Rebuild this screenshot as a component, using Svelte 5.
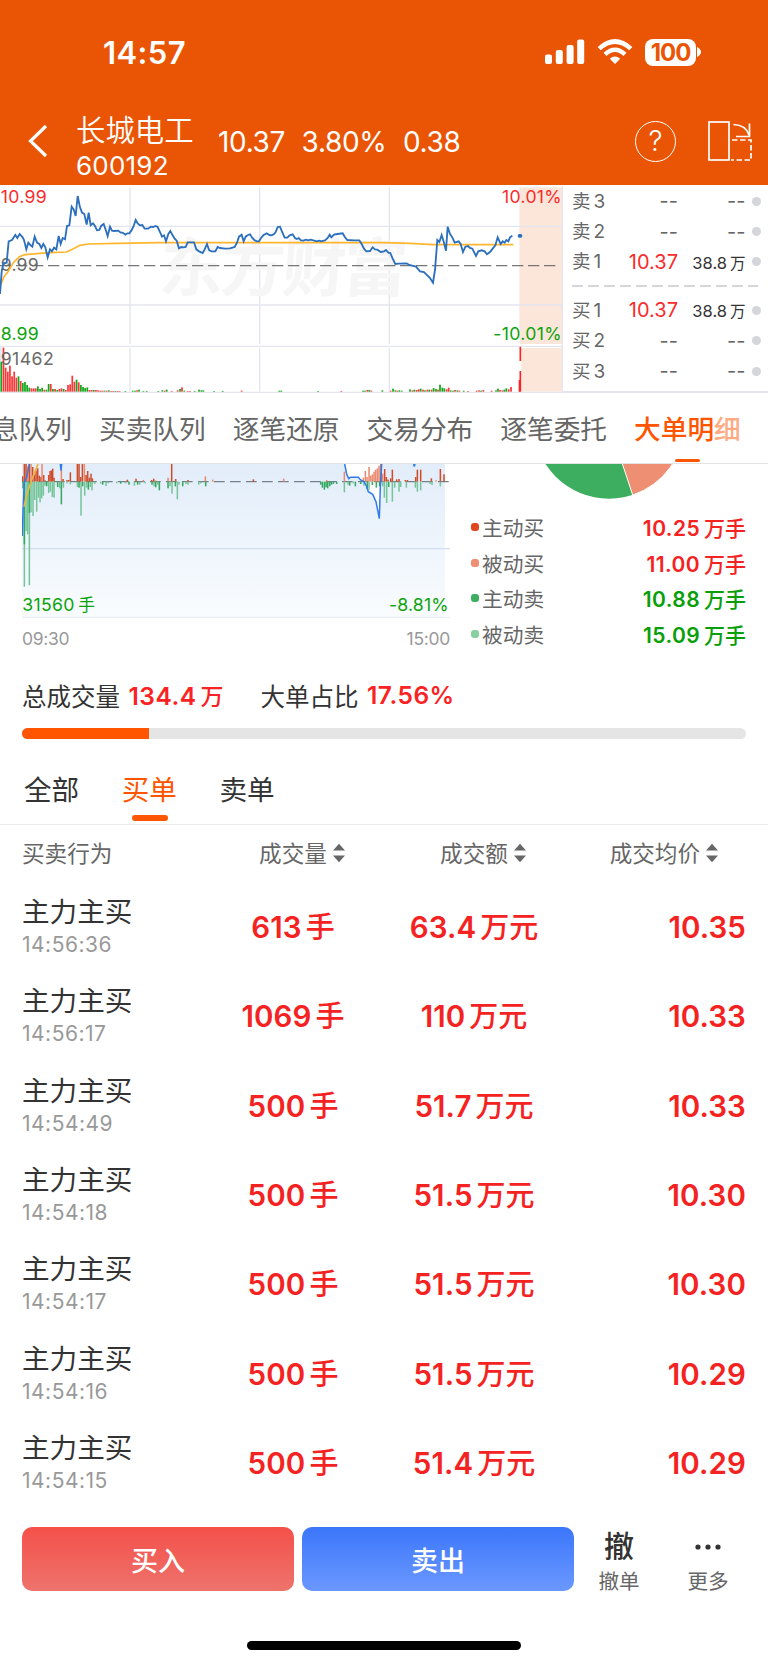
<script lang="ts">
  interface Level {
    label: string;
    price: string;
    volume: string;
  }

  interface Order {
    time: string;
    volume: string;
    amount: string;
    price: string;
  }

  // [x, height, colour key]
  type Bar = [number, number, string];

  const asks: Level[] = [
    { label: '卖3', price: '--', volume: '--' },
    { label: '卖2', price: '--', volume: '--' },
    { label: '卖1', price: '10.37', volume: '38.8' },
  ];
  const bids: Level[] = [
    { label: '买1', price: '10.37', volume: '38.8' },
    { label: '买2', price: '--', volume: '--' },
    { label: '买3', price: '--', volume: '--' },
  ];

  const tabs = ['息队列', '买卖队列', '逐笔还原', '交易分布', '逐笔委托', '大单明细'];
  const activeTab = '大单明细';

  const legend = [
    { label: '主动买', value: '10.25', color: '#e2461b', up: true },
    { label: '被动买', value: '11.00', color: '#ee8e72', up: true },
    { label: '主动卖', value: '10.88', color: '#3dae60', up: false },
    { label: '被动卖', value: '15.09', color: '#88d0a0', up: false },
  ];

  const filters = ['全部', '买单', '卖单'];
  let filter = $state('买单');

  const orders: Order[] = [
    { time: '14:56:36', volume: '613', amount: '63.4', price: '10.35' },
    { time: '14:56:17', volume: '1069', amount: '110', price: '10.33' },
    { time: '14:54:49', volume: '500', amount: '51.7', price: '10.33' },
    { time: '14:54:18', volume: '500', amount: '51.5', price: '10.30' },
    { time: '14:54:17', volume: '500', amount: '51.5', price: '10.30' },
    { time: '14:54:16', volume: '500', amount: '51.5', price: '10.29' },
    { time: '14:54:15', volume: '500', amount: '51.4', price: '10.29' },
  ];

  const bigOrderRatio = 17.56;

  const priceLine =
    '0,342 5,275 10,250 20,248 26,184 36,180 46,165 52,174 59,162 68,172 72,180 79,208 85,188 92,196 97,200 104,170 111,188 118,192 124,204 130,192 136,202 143,232 150,208 156,214 162,203 169,208 176,168 182,192 188,174 195,178 201,138 208,136 215,80 221,88 227,108 233,48 240,82 246,98 253,102 260,134 266,98 272,136 279,130 285,138 291,151 298,150 304,137 311,132 318,152 323,168 330,140 336,152 343,153 355,152 362,158 368,158 376,164 382,160 388,160 394,152 401,138 407,120 413,130 420,136 427,135 434,146 444,146 453,140 460,141 466,138 473,141 480,156 486,170 492,166 498,184 505,162 511,153 518,166 524,176 530,182 537,205 544,201 550,202 557,201 563,187 582,187 589,208 597,214 608,219 614,208 621,192 627,210 634,214 646,214 653,201 660,204 675,206 690,205 704,201 711,188 717,170 725,164 731,184 737,170 744,165 750,163 757,174 763,180 770,184 777,184 783,174 790,166 800,160 808,165 815,166 822,162 827,156 833,141 840,140 847,157 854,173 862,173 869,166 878,163 885,174 890,177 896,174 903,181 910,182 918,179 924,181 932,179 940,181 950,184 958,182 963,184 975,181 983,174 989,164 994,172 1002,164 1012,162 1028,160 1035,172 1042,180 1062,181 1078,181 1085,192 1092,206 1099,214 1110,213 1118,202 1125,208 1132,209 1142,216 1152,214 1158,210 1165,218 1171,219 1178,236 1186,252 1196,251 1220,250 1228,255 1236,257 1248,260 1260,274 1272,276 1282,286 1290,294 1299,308 1305,270 1312,180 1318,186 1325,165 1332,188 1338,212 1343,140 1350,162 1357,172 1364,188 1376,184 1382,192 1389,216 1396,200 1404,198 1410,204 1417,206 1428,228 1435,214 1445,211 1454,214 1461,223 1470,216 1478,206 1486,196 1493,172 1502,192 1508,184 1514,188 1519,180 1525,184 1530,172 1537,167';
  const averageLine =
    '0,320 12,290 24,275 40,248 58,230 75,224 110,221 150,218 200,216 220,206 240,196 265,192 350,190 480,188 1150,188 1230,190 1300,194 1540,194';

  // opening minutes, one bar each
  const opening =
    'g90 r132 r72 r60 r78 r46 r60 r42 g46 r32 g26 g29 g20 g12 r10 r10 r10 g16 g8 g12 r6 g6 g23 r23 g8 r8 g5 r8 r10 g8 r5 r20 r22 r48 r30 g36 r28 g20 g14 g11 g13 r5 r5 g5 r5 r4 r3 r3 g3 r3 g4 r2 r2 g2 r2 r2';
  const volumes: Bar[] = [
    ...opening.split(' ').map((b, i): Bar => [4 + i * 6.45, Number(b.slice(1)), b[0]]),
    [376, 2, 'g'], [398, 3, 'g'], [405, 3, 'g'], [411, 4, 'r'], [417, 6, 'g'], [430, 2, 'g'], [440, 2, 'g'],
    [475, 2, 'g'], [487, 4, 'g'], [494, 3, 'r'], [500, 6, 'g'], [515, 2, 'r'], [533, 4, 'r'], [540, 8, 'g'],
    [546, 13, 'r'], [553, 3, 'g'], [563, 2, 'r'], [570, 2, 'r'], [584, 2, 'g'], [597, 6, 'g'], [604, 4, 'g'],
    [610, 4, 'g'], [642, 2, 'g'], [668, 2, 'g'], [725, 3, 'r'], [838, 3, 'g'], [844, 3, 'g'], [954, 2, 'g'],
    [1024, 2, 'r'], [1089, 3, 'g'], [1095, 3, 'g'], [1102, 5, 'r'], [1108, 5, 'g'], [1114, 3, 'r'], [1147, 4, 'g'],
    [1172, 3, 'r'], [1179, 9, 'g'], [1186, 4, 'g'], [1192, 3, 'r'], [1198, 4, 'g'], [1205, 3, 'g'], [1230, 7, 'g'],
    [1237, 4, 'r'], [1243, 6, 'g'], [1250, 5, 'r'], [1256, 7, 'r'], [1262, 9, 'g'], [1269, 6, 'r'], [1275, 4, 'g'],
    [1282, 6, 'r'], [1288, 6, 'g'], [1295, 6, 'r'], [1301, 11, 'g'], [1308, 8, 'g'], [1314, 6, 'r'], [1320, 21, 'g'],
    [1327, 12, 'g'], [1333, 10, 'g'], [1340, 7, 'r'], [1346, 12, 'r'], [1352, 4, 'g'], [1359, 3, 'g'], [1365, 5, 'r'],
    [1372, 4, 'g'], [1378, 3, 'r'], [1391, 3, 'g'], [1404, 2, 'r'], [1430, 3, 'r'], [1437, 4, 'r'], [1443, 3, 'g'],
    [1450, 5, 'r'], [1475, 3, 'r'], [1488, 4, 'g'], [1494, 9, 'g'], [1500, 5, 'r'], [1507, 4, 'r'], [1513, 6, 'g'],
    [1519, 10, 'g'], [1526, 7, 'r'], [1533, 14, 'r'],
  ];

  // large orders around the zero line: R/r active/passive buy, G/g active/passive sell
  const flow: Bar[] = [
    [68, 16, 'R'], [73, 53, 'R'], [78, 53, 'R'], [83, 46, 'r'], [88, 53, 'R'], [93, 53, 'r'], [98, 44, 'R'],
    [103, 20, 'R'], [108, 34, 'R'], [113, 40, 'R'], [118, 18, 'R'], [123, 14, 'R'], [126, 53, 'r'], [131, 20, 'R'],
    [135, 4, 'R'], [146, 20, 'R'], [150, 32, 'R'], [154, 34, 'R'], [158, 39, 'R'], [162, 12, 'R'], [184, 36, 'r'],
    [189, 8, 'R'], [201, 5, 'R'], [206, 5, 'R'], [211, 28, 'R'], [232, 53, 'R'], [237, 53, 'R'], [242, 14, 'R'],
    [247, 53, 'R'], [253, 53, 'r'], [258, 20, 'R'], [263, 32, 'R'], [268, 12, 'R'], [273, 24, 'R'], [277, 10, 'R'],
    [382, 6, 'R'], [408, 9, 'R'], [430, 5, 'r'], [455, 5, 'R'], [461, 9, 'R'], [466, 4, 'r'], [504, 12, 'r'],
    [515, 53, 'R'], [527, 8, 'R'], [564, 5, 'R'], [616, 16, 'r'], [638, 6, 'r'], [760, 7, 'R'], [851, 9, 'r'],
    [980, 5, 'r'], [1033, 30, 'r'], [1090, 12, 'r'], [1096, 32, 'r'], [1101, 14, 'r'], [1107, 44, 'r'], [1112, 18, 'r'],
    [1117, 22, 'r'], [1122, 30, 'r'], [1127, 36, 'r'], [1132, 40, 'r'], [1137, 48, 'r'], [1143, 53, 'R'], [1148, 24, 'r'],
    [1154, 38, 'R'], [1159, 14, 'R'], [1164, 6, 'R'], [1172, 10, 'R'], [1177, 36, 'R'], [1190, 7, 'R'], [1197, 8, 'R'],
    [1216, 5, 'R'], [1222, 5, 'R'], [1247, 14, 'R'], [1252, 36, 'R'], [1262, 36, 'R'], [1294, 10, 'R'], [1308, 4, 'r'],
    [1321, 38, 'R'], [1332, 22, 'R'],
    [69, -20, 'G'], [73, -315, 'g'], [73, -188, 'G'], [78, -148, 'g'], [83, -158, 'g'], [88, -311, 'g'], [88, -94, 'G'],
    [93, -92, 'g'], [99, -103, 'g'], [104, -55, 'g'], [110, -90, 'g'], [115, -48, 'g'], [120, -62, 'g'], [125, -50, 'g'],
    [130, -42, 'g'], [135, -12, 'g'], [140, -14, 'G'], [146, -34, 'g'], [151, -30, 'g'], [157, -46, 'g'], [162, -48, 'g'],
    [173, -16, 'G'], [179, -20, 'g'], [184, -68, 'G'], [190, -18, 'g'], [201, -5, 'g'], [211, -8, 'g'], [232, -16, 'g'],
    [237, -18, 'G'], [243, -102, 'g'], [248, -14, 'G'], [254, -42, 'g'], [260, -18, 'g'], [265, -24, 'G'], [271, -16, 'g'],
    [276, -26, 'g'], [284, -7, 'g'], [302, -6, 'g'], [308, -9, 'G'], [318, -13, 'g'], [324, -5, 'g'], [350, -5, 'g'],
    [362, -6, 'G'], [376, -5, 'g'], [387, -9, 'G'], [403, -12, 'g'], [413, -9, 'G'], [419, -9, 'g'], [435, -5, 'g'],
    [456, -9, 'G'], [462, -14, 'g'], [467, -17, 'G'], [473, -9, 'g'], [478, -26, 'G'], [504, -20, 'G'], [510, -14, 'g'],
    [516, -36, 'g'], [526, -14, 'G'], [532, -53, 'g'], [537, -9, 'g'], [548, -14, 'G'], [558, -7, 'g'], [564, -9, 'g'],
    [596, -9, 'g'], [602, -5, 'g'], [617, -14, 'G'], [962, -9, 'G'], [967, -18, 'G'], [973, -24, 'G'], [978, -17, 'G'],
    [983, -20, 'G'], [989, -14, 'G'], [994, -9, 'G'], [1000, -7, 'G'], [1010, -7, 'G'], [1033, -32, 'g'], [1044, -9, 'g'],
    [1049, -12, 'G'], [1060, -5, 'g'], [1066, -14, 'G'], [1082, -7, 'G'], [1092, -12, 'g'], [1102, -22, 'G'], [1107, -24, 'g'],
    [1117, -10, 'G'], [1129, -18, 'G'], [1139, -14, 'G'], [1148, -14, 'g'], [1153, -48, 'g'], [1160, -64, 'g'], [1166, -16, 'G'],
    [1177, -60, 'g'], [1184, -18, 'g'], [1197, -30, 'g'], [1202, -16, 'g'], [1219, -18, 'g'], [1246, -18, 'g'], [1252, -30, 'g'],
    [1262, -26, 'g'], [1290, -7, 'g'], [1296, -10, 'g'], [1321, -14, 'g'],
  ];

  const flowColors: Record<string, string> = { R: '#d04d2c', r: '#e98a6f', G: '#35a862', g: '#76c59a' };
</script>

{#snippet book(levels: Level[])}
  {#each levels as l}
    <div class="level">
      <span class="side">{l.label[0]}<i>{l.label[1]}</i></span>
      <span class="price" class:up={l.price !== '--'}>{l.price}</span>
      <span class="vol" class:filled={l.volume !== '--'}>
        {l.volume}{#if l.volume !== '--'}<em>万</em>{/if}
      </span>
      <span class="dot"></span>
    </div>
  {/each}
{/snippet}

{#snippet sorter()}
  <svg class="sorter" width="12" height="20" viewBox="0 0 12 20">
    <path d="M0 7.5 6 .8 12 7.5ZM0 12.5 6 19.2 12 12.5Z" fill="#666" />
  </svg>
{/snippet}

<div class="screen">
  <header>
    <div class="status">
      <span class="clock">14:57</span>
      <div class="status-icons">
        <svg width="40" height="26" viewBox="0 0 40 26" fill="#fff">
          <rect x="0" y="15.5" width="7" height="9.5" rx="2" />
          <rect x="10.8" y="11" width="7" height="14" rx="2" />
          <rect x="21.6" y="6" width="7" height="19" rx="2" />
          <rect x="32.2" y=".5" width="7" height="24.5" rx="2" />
        </svg>
        <svg class="wifi" width="36" height="26" viewBox="0 0 36 26" fill="none" stroke="#fff">
          <path d="M2.2 9.6Q18-4.6 33.8 9.6" stroke-width="4.6" />
          <path d="M8 15.4Q18 6.2 28 15.4" stroke-width="4.4" />
          <path d="M12.8 19.8Q18 15.4 23.2 19.8L18 25Z" fill="#fff" stroke="none" />
        </svg>
        <div class="battery"><span>100</span></div>
        <svg class="cap" width="4" height="10" viewBox="0 0 4 10"><path d="M0 0Q4 2 4 5T0 10Z" fill="#fff" /></svg>
      </div>
    </div>

    <div class="nav">
      <svg class="back" width="20" height="34" viewBox="0 0 20 34" fill="none" stroke="#fff" stroke-width="3.2">
        <path d="M18 2 2.5 17 18 32" />
      </svg>
      <div class="stock">
        <span class="name">长城电工</span>
        <span class="code">600192</span>
      </div>
      <div class="quote">
        <span>10.37</span>
        <span>3.80%</span>
        <span>0.38</span>
      </div>
      <div class="help">?</div>
      <svg class="rotate" width="44" height="40" viewBox="0 0 44 40" fill="none" stroke="#fff" stroke-width="1.7">
        <rect x="1" y="1" width="20" height="38" />
        <path d="M25.5 3.5Q38 4 41 14M41.5 2.5V15.5H28" />
        <path d="M24 19H43V39H23" stroke-dasharray="5.5 2.5" />
      </svg>
    </div>
  </header>

  <section class="market">
    <svg class="trend" width="563" height="208" viewBox="0 15 1689 624">
      <rect x="1558" y="22" width="128" height="470" fill="#fce6da" />
      <rect x="1564" y="504" width="122" height="131" fill="#fce6da" />
      <g stroke="#e4e5ef" stroke-width="4">
        <path d="M390 22V492M779 22V492M1168 22V492M390 504V635M779 504V635M1168 504V635" />
        <path d="M0 139H1686M0 375H1686M0 499H1686M0 637H1689M2 499V637" />
        <path d="M1687 18V637" />
      </g>
      <text class="watermark" transform="translate(474 332) skewX(-4)" textLength="744">东方财富</text>
      <path d="M0 257H1674" stroke="#777" stroke-width="4" stroke-dasharray="34 14" />
      <text class="axis up" x="2" y="68" textLength="138">10.99</text>
      <text class="axis up" x="1506" y="68" textLength="179">10.01%</text>
      <text class="axis mid" x="2" y="273" textLength="114">9.99</text>
      <text class="axis down" x="2" y="479" textLength="114">8.99</text>
      <text class="axis down" x="1480" y="479" textLength="205">-10.01%</text>
      <polyline points={averageLine} fill="none" stroke="#ffb62e" stroke-width="5" />
      <polyline points={priceLine} fill="none" stroke="#2c6fbd" stroke-width="5.5" />
      <rect x="1553" y="162" width="14" height="11" rx="5" fill="#2c6fbd" />
      {#each volumes as [x, h, tone]}
        <rect x={x - 2.6} y={635 - h} width="5.2" height={h} fill={tone === 'r' ? '#f8393b' : '#16a51c'} />
      {/each}
      <path d="M1561 500V543M1561 573V635" stroke="#f22" stroke-width="5" />
      <path d="M1558 600V635" stroke="#f22" stroke-width="4" />
      <text class="axis mid" x="2" y="555" textLength="159">91462</text>
    </svg>
    <div class="book">
      {@render book(asks)}
      <div class="split"></div>
      {@render book(bids)}
    </div>
  </section>

  <nav class="tabs">
    {#each tabs as tab}
      <span class="tab" class:active={tab === activeTab}>{tab}</span>
    {/each}
  </nav>

  <section class="detail">
    <div class="flow">
      <svg width="428" height="154" viewBox="66 192 1284 462">
        <defs>
          <linearGradient id="sky" x1="0" y1="0" x2="0" y2="1">
            <stop offset="0" stop-color="#e2edfa" />
            <stop offset="1" stop-color="#f9fcfe" />
          </linearGradient>
        </defs>
        <rect x="66" y="192" width="1269" height="460" fill="url(#sky)" />
        <path
          d="M1034 192 1040 222 1046 236 1075 232 1092 245 1105 275 1118 283 1128 305 1138 356 1145 192Z"
          fill="#fff"
        />
        <path d="M66 446H1350" stroke="#d3dff0" stroke-width="4" />
        <path d="M66 652H1350" stroke="#e8ebf0" stroke-width="3" />
        <path d="M66 245H1350" stroke="#777f86" stroke-width="3.5" stroke-dasharray="32 16" />
        {#each flow as [x, h, tone]}
          <rect x={x - 2.2} y={h > 0 ? 245 - h : 245} width="4.6" height={Math.abs(h)} fill={flowColors[tone]} />
        {/each}
        <path
          d="M67 408 69 330 73 245 80 232 88 192M181 192 183 212 185 192M1034 192 1040 222 1046 236 1052 232 1075 232 1082 240 1092 245 1098 255 1105 275 1118 283 1128 305 1138 356 1141 260 1145 192M1241 192 1243 200 1245 192"
          fill="none"
          stroke="#2f7bea"
          stroke-width="4.5"
        />
        <path d="M72 320 80 285 88 260 95 240 105 215 114 192" fill="none" stroke="#ecb640" stroke-width="5" />
        <text class="axis down" x="67" y="633" textLength="156">31560</text>
        <text class="axis down cjk" x="235" y="632">手</text>
        <text class="axis down" x="1167" y="633" textLength="179">-8.81%</text>
      </svg>
      <div class="hours"><span>09:30</span><span>15:00</span></div>
    </div>
    <div class="share">
      <svg width="275" height="36" viewBox="471 464 275 36">
        <circle cx="609" cy="423.5" r="75.3" fill="#3dae60" />
        <path d="M609 423.5 632.7 495A75.3 75.3 0 0 0 684.3 423.5Z" fill="#ee8e72" stroke="#fff" stroke-width="1" />
      </svg>
      <ul>
        {#each legend as item}
          <li>
            <span class="mark" style="background: {item.color}"></span>
            <span class="kind">{item.label}</span>
            <span class="lots" class:up={item.up}>{item.value}<em>万手</em></span>
          </li>
        {/each}
      </ul>
    </div>
  </section>

  <section class="summary">
    <div class="totals">
      <span>总成交量</span>
      <b class="total">134.4<em>万</em></b>
      <span>大单占比</span>
      <b>{bigOrderRatio}%</b>
    </div>
    <div class="bar"><div class="fill" style="width: {bigOrderRatio}%"></div></div>
  </section>

  <div class="filters">
    {#each filters as f}
      <button class:on={f === filter} onclick={() => (filter = f)}>{f}</button>
    {/each}
  </div>

  <div class="orders">
    <div class="row head">
      <span>买卖行为</span>
      <span class="center">成交量{@render sorter()}</span>
      <span class="center">成交额{@render sorter()}</span>
      <span class="end">成交均价{@render sorter()}</span>
    </div>
    {#each orders as o}
      <div class="row">
        <div class="action">
          <span class="who">主力主买</span>
          <span class="time">{o.time}</span>
        </div>
        <span class="center num">{o.volume}<em>手</em></span>
        <span class="center num">{o.amount}<em>万元</em></span>
        <span class="end num">{o.price}</span>
      </div>
    {/each}
  </div>

  <footer>
    <div class="actions">
      <button class="trade buy">买入</button>
      <button class="trade sell">卖出</button>
      <div class="tool cancel"><span class="glyph">撤</span><span>撤单</span></div>
      <div class="tool">
        <span class="glyph">
          <svg width="26" height="6" viewBox="0 0 26 6" fill="#333">
            <circle cx="3" cy="3" r="2.6" /><circle cx="13" cy="3" r="2.6" /><circle cx="23" cy="3" r="2.6" />
          </svg>
        </span>
        <span>更多</span>
      </div>
    </div>
    <div class="home"></div>
  </footer>
</div>

<style>
  :global(body) {
    margin: 0;
    background: #fff;
  }

  .screen {
    width: 768px;
    height: 1665px;
    overflow: hidden;
    background: #fff;
    color: #333;
    font-family: Inter, 'Noto Sans CJK SC', sans-serif;
    font-feature-settings: 'calt' 0;
    display: flex;
    flex-direction: column;
  }

  em,
  i {
    font-style: normal;
  }

  button {
    font-family: inherit;
    border: 0;
    padding: 0;
    background: none;
  }

  /* header */
  header {
    height: 185px;
    flex-shrink: 0;
    background: #e95504;
    color: #fff;
  }

  .status {
    height: 104px;
    display: flex;
    align-items: center;
    justify-content: space-between;
    padding: 0 67px 0 103px;
  }

  .clock {
    font-size: 31px;
    font-weight: 600;
    line-height: 40px;
    letter-spacing: 0.4px;
    padding-top: 2px;
  }

  .status-icons {
    display: flex;
    align-items: center;
  }

  .wifi {
    margin: 0 12px 0 12px;
  }

  .battery {
    width: 51px;
    height: 27px;
    border-radius: 8px;
    background: #fff;
    color: #e95504;
    font-size: 24px;
    font-weight: 700;
    line-height: 27px;
    text-align: center;
    letter-spacing: -1px;
  }

  .cap {
    margin-left: 1px;
  }

  .nav {
    height: 81px;
    display: flex;
    align-items: center;
    padding: 0 16px 0 28px;
  }

  .back {
    margin-bottom: 7px;
  }

  .stock {
    width: 142px;
    margin-left: 28px;
    padding-top: 6px;
    display: flex;
    flex-direction: column;
  }

  .name {
    font-size: 29.4px;
    line-height: 36px;
    font-weight: 350;
  }

  .code {
    font-size: 26px;
    line-height: 34px;
    letter-spacing: 0.2px;
  }

  .quote {
    flex: 1;
    display: flex;
    gap: 16.5px;
    font-size: 28px;
    line-height: 34px;
    letter-spacing: -0.35px;
    padding-bottom: 6px;
  }

  .help {
    width: 39px;
    height: 39px;
    border: 1.6px solid #fff;
    border-radius: 50%;
    font-size: 28px;
    font-weight: 300;
    line-height: 39px;
    text-align: center;
    margin: 0 32px 7px 0;
    flex-shrink: 0;
  }

  .rotate {
    margin-bottom: 7px;
  }

  /* intraday chart and order book */
  .market {
    display: flex;
    height: 208px;
    flex-shrink: 0;
  }

  .trend {
    flex-shrink: 0;
  }

  .axis {
    font-size: 53px;
  }

  .axis.up {
    fill: #fa2b2b;
  }

  .axis.down {
    fill: #0ca30c;
  }

  .axis.mid {
    fill: #6a6a6a;
  }

  .cjk {
    font-size: 50px;
  }

  .watermark {
    font-size: 192px;
    font-weight: 700;
    fill: #f6f6f6;
  }

  .book {
    flex: 1;
    box-sizing: border-box;
    padding: 1px 7px 0 9px;
    border-bottom: 2px solid #e4e5ea;
  }

  .level {
    display: flex;
    align-items: center;
    height: 30.4px;
    color: #666;
    font-size: 19px;
  }

  .side {
    width: 46px;
    font-size: 18.5px;
    line-height: 26px;
  }

  .side i {
    margin-left: 3px;
    font-size: 19px;
  }

  .price {
    width: 60px;
    text-align: right;
    font-size: 20px;
    letter-spacing: 0;
  }

  .price.up {
    color: #fa2b2b;
  }

  .vol {
    flex: 1;
    text-align: right;
    font-size: 20px;
  }

  .vol.filled {
    color: #333;
    font-size: 16.5px;
  }

  .vol em {
    font-size: 15.5px;
    margin-left: 3px;
  }

  .dot {
    width: 9px;
    height: 9px;
    border-radius: 50%;
    background: #d4d6dc;
    margin-left: 6.5px;
  }

  .split {
    height: 18px;
    background: repeating-linear-gradient(90deg, #d4d6dc 0 11px, transparent 11px 16px) 0 8px / 186px 2px no-repeat;
  }

  /* tabs */
  .tabs {
    height: 71px;
    box-sizing: border-box;
    flex-shrink: 0;
    position: relative;
    display: flex;
    gap: 27px;
    margin-left: -8px;
    border-bottom: 1px solid #e3e3e3;
    overflow: hidden;
    white-space: nowrap;
    font-size: 26.7px;
    line-height: 72px;
    color: #666;
  }

  .tabs::after {
    content: '';
    position: absolute;
    top: 0;
    right: 0;
    width: 53px;
    height: 60px;
    background: rgba(255, 255, 255, 0.5);
  }

  .tab {
    flex-shrink: 0;
    position: relative;
  }

  .tab.active {
    color: #ff5500;
    font-weight: 500;
  }

  .tab.active::after {
    content: '';
    position: absolute;
    left: 41px;
    top: 66px;
    width: 25px;
    height: 3px;
    border-radius: 2px;
    background: #ff5500;
  }

  /* big order flow */
  .detail {
    display: flex;
    justify-content: space-between;
    height: 190px;
    flex-shrink: 0;
    padding: 0 22px;
  }

  .detail svg {
    display: block;
  }

  .hours {
    display: flex;
    justify-content: space-between;
    margin-top: 9px;
    font-size: 17.5px;
    line-height: 24px;
    letter-spacing: -0.3px;
    color: #999;
  }

  .share {
    width: 275px;
  }

  ul {
    list-style: none;
    margin: 9px 0 0;
    padding: 0;
  }

  li {
    display: flex;
    align-items: center;
    height: 35.7px;
  }

  .mark {
    width: 8px;
    height: 8px;
    border-radius: 3px;
  }

  .kind {
    margin-left: 3px;
    font-size: 20.7px;
    color: #666;
  }

  .lots {
    flex: 1;
    text-align: right;
    font-size: 21px;
    font-weight: 600;
    letter-spacing: 0.4px;
    color: #0a9f0a;
  }

  .lots.up {
    color: #f52222;
  }

  .lots em {
    margin-left: 4px;
    font-weight: 500;
    letter-spacing: 0;
  }

  /* totals */
  .summary {
    padding: 20px 22px 0;
    flex-shrink: 0;
  }

  .totals {
    display: flex;
    height: 42px;
    align-items: center;
    font-size: 24.5px;
    white-space: nowrap;
  }

  .totals b {
    margin-left: 8.5px;
    font-weight: 600;
    color: #fa2222;
    letter-spacing: 0.5px;
  }

  .totals .total {
    width: 132px;
  }

  .totals em {
    margin-left: 4px;
    font-size: 23px;
    font-weight: 500;
  }

  .bar {
    height: 11px;
    margin-top: 12px;
    border-radius: 6px;
    background: #e5e5e5;
    overflow: hidden;
  }

  .fill {
    height: 100%;
    background: #ff5500;
  }

  /* filters */
  .filters {
    display: flex;
    gap: 42.5px;
    height: 86px;
    box-sizing: border-box;
    flex-shrink: 0;
    padding: 20px 0 0 24px;
    border-bottom: 1px solid #ececec;
  }

  .filters button {
    height: 65px;
    font-size: 27.6px;
    line-height: 60px;
    padding-bottom: 4px;
    color: #333;
    position: relative;
  }

  .filters .on {
    color: #ff5500;
  }

  .filters .on::after {
    content: '';
    position: absolute;
    left: 10px;
    bottom: 3px;
    width: 36px;
    height: 6px;
    border-radius: 3px;
    background: #ff5500;
  }

  /* order list */
  .orders {
    padding: 0 22px;
    flex-shrink: 0;
  }

  .row {
    display: grid;
    grid-template-columns: 180px 182px 180px 182px;
    align-items: center;
    height: 89.3px;
    white-space: nowrap;
  }

  .row.head {
    height: 59px;
    box-sizing: border-box;
    padding-bottom: 4px;
    font-size: 22.6px;
    color: #666;
  }

  .head .center {
    padding-left: 18px;
  }

  .head .end {
    padding-right: 28px;
  }

  .sorter {
    margin-left: 6px;
    vertical-align: -1px;
  }

  .center {
    text-align: center;
  }

  .end {
    text-align: right;
  }

  .action {
    display: flex;
    flex-direction: column;
    padding-bottom: 1px;
  }

  .who {
    font-size: 27.6px;
    line-height: 33px;
  }

  .time {
    font-size: 21px;
    line-height: 31px;
    letter-spacing: 0.5px;
    color: #999;
  }

  .num {
    font-size: 29.5px;
    line-height: 40px;
    font-weight: 600;
    color: #f52222;
    letter-spacing: 0.1px;
    padding-bottom: 3px;
  }

  .num em {
    margin-left: 4px;
    font-size: 29px;
    line-height: 1;
    font-weight: 500;
    letter-spacing: 0;
  }

  /* bottom bar */
  footer {
    flex: 1;
    display: flex;
    flex-direction: column;
    justify-content: space-between;
    align-items: center;
    padding: 18px 0 15px;
  }

  .actions {
    width: 732px;
    margin-left: 8px;
    display: flex;
    gap: 8px;
  }

  .trade {
    width: 272px;
    height: 64px;
    flex-shrink: 0;
    border-radius: 10px;
    color: #fff;
    font-size: 27px;
    font-weight: 500;
  }

  .buy {
    background: linear-gradient(#f5504a, #ed736c);
  }

  .sell {
    background: linear-gradient(#3b76fa, #6b98ff);
  }

  .tool {
    width: 88px;
    flex-shrink: 0;
    display: flex;
    flex-direction: column;
    align-items: center;
    font-size: 20.6px;
    line-height: 34px;
    color: #666;
    padding-top: 1px;
  }

  .cancel {
    width: 74px;
  }

  .glyph {
    height: 37px;
    line-height: 37px;
    font-size: 30px;
    font-weight: 500;
    color: #333;
    display: flex;
    align-items: center;
  }

  .home {
    width: 274px;
    height: 9px;
    border-radius: 5px;
    background: #000;
  }
</style>
